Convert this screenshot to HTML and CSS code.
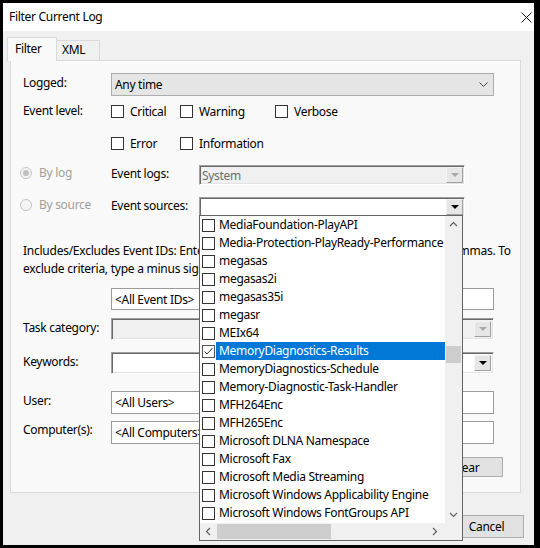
FILE: index.html
```html
<!DOCTYPE html>
<html lang="en">
<head>
    <meta charset="UTF-8">
    <link rel="stylesheet" href="styles.css">
    <title>Filter Current Log</title>
</head>
<body>
<div class="dialog">
    <div class="titleBar">
        <span class="titleText">Filter Current Log</span>
        <svg class="closeIcon" width="11" height="11" viewBox="0 0 11 11">
            <path d="M0.5 0.5 L10.5 10.5 M10.5 0.5 L0.5 10.5" stroke="#111" stroke-width="1" fill="none"/>
        </svg>
    </div>

    <div class="tabStrip">
        <div class="tab tabActive">Filter</div>
        <div class="tab">XML</div>
    </div>

    <div class="tabPage">
        <div class="row rowLogged">
            <span class="fieldLabel">Logged:</span>
            <div class="combo">
                <span>Any time</span>
                <svg width="9" height="5" viewBox="0 0 9 5">
                    <path d="M0.5 0.5 L4.5 4.5 L8.5 0.5" stroke="#444" fill="none"/>
                </svg>
            </div>
        </div>

        <div class="row rowLevel">
            <span class="fieldLabel levelLabel">Event level:</span>
            <div class="levelGrid">
                <label class="check"><span class="box"></span>Critical</label>
                <label class="check"><span class="box"></span>Warning</label>
                <label class="check"><span class="box"></span>Verbose</label>
                <label class="check"><span class="box"></span>Error</label>
                <label class="check"><span class="box"></span>Information</label>
            </div>
        </div>

        <div class="sourceRow sourceLog">
            <span class="radioWrap"><span class="radio radioOn"></span>By log</span>
            <span class="fieldLabel">Event logs:</span>
            <div class="oldCombo oldComboOff">
                <span>System</span>
                <span class="dropBtn dropBtnOff"></span>
            </div>
        </div>

        <div class="sourceRow sourceSrc">
            <span class="radioWrap"><span class="radio"></span>By source</span>
            <span class="fieldLabel">Event sources:</span>
            <div class="oldCombo">
                <span></span>
                <span class="dropBtn"></span>
            </div>
        </div>

        <p class="hint">Includes/Excludes Event IDs: Enter ID numbers and/or ID ranges separated by commas. To<br>exclude criteria, type a minus sign first. For example 1,3,5-99,-76</p>

        <div class="row rowIds">
            <span></span>
            <div class="textBox">&lt;All Event IDs&gt;</div>
        </div>

        <div class="row rowTask">
            <span class="fieldLabel">Task category:</span>
            <div class="oldCombo oldComboOff wide">
                <span></span>
                <span class="dropBtn dropBtnOff"></span>
            </div>
        </div>

        <div class="row rowKeywords">
            <span class="fieldLabel">Keywords:</span>
            <div class="oldCombo wide">
                <span></span>
                <span class="dropBtn"></span>
            </div>
        </div>

        <div class="row rowUser">
            <span class="fieldLabel">User:</span>
            <div class="textBox tall">&lt;All Users&gt;</div>
        </div>

        <div class="row rowComputer">
            <span class="fieldLabel">Computer(s):</span>
            <div class="textBox tall">&lt;All Computers&gt;</div>
        </div>

        <div class="clearRow">
            <button class="btn btnClear">Clear</button>
        </div>
    </div>

    <div class="footer">
        <button class="btn">OK</button>
        <button class="btn">Cancel</button>
    </div>

    <!-- open list of the Event sources combo -->
    <div class="dropList">
        <div class="items">
            <div class="item"><span class="box"></span><span class="itemText">MediaFoundation-PlayAPI</span></div>
            <div class="item"><span class="box"></span><span class="itemText">Media-Protection-PlayReady-Performance</span></div>
            <div class="item"><span class="box"></span><span class="itemText">megasas</span></div>
            <div class="item"><span class="box"></span><span class="itemText">megasas2i</span></div>
            <div class="item"><span class="box"></span><span class="itemText">megasas35i</span></div>
            <div class="item"><span class="box"></span><span class="itemText">megasr</span></div>
            <div class="item"><span class="box"></span><span class="itemText">MEIx64</span></div>
            <div class="item itemSelected">
                <span class="box boxChecked">
                    <svg width="11" height="11" viewBox="0 0 11 11">
                        <path d="M1.5 5.5 L4 8 L9.5 2" stroke="#333" stroke-width="1" fill="none"/>
                    </svg>
                </span>
                <span class="itemText">MemoryDiagnostics-Results</span>
            </div>
            <div class="item"><span class="box"></span><span class="itemText">MemoryDiagnostics-Schedule</span></div>
            <div class="item"><span class="box"></span><span class="itemText">Memory-Diagnostic-Task-Handler</span></div>
            <div class="item"><span class="box"></span><span class="itemText">MFH264Enc</span></div>
            <div class="item"><span class="box"></span><span class="itemText">MFH265Enc</span></div>
            <div class="item"><span class="box"></span><span class="itemText">Microsoft DLNA Namespace</span></div>
            <div class="item"><span class="box"></span><span class="itemText">Microsoft Fax</span></div>
            <div class="item"><span class="box"></span><span class="itemText">Microsoft Media Streaming</span></div>
            <div class="item"><span class="box"></span><span class="itemText">Microsoft Windows Applicability Engine</span></div>
            <div class="item"><span class="box"></span><span class="itemText">Microsoft Windows FontGroups API</span></div>
        </div>
        <div class="vScroll">
            <svg width="17" height="17" viewBox="0 0 17 17">
                <path d="M5 10 L8.5 6.5 L12 10" stroke="#606060" stroke-width="1.2" fill="none"/>
            </svg>
            <div class="vThumb"></div>
            <svg class="vDown" width="17" height="17" viewBox="0 0 17 17">
                <path d="M5 7 L8.5 10.5 L12 7" stroke="#606060" stroke-width="1.2" fill="none"/>
            </svg>
        </div>
        <div class="hScroll">
            <svg width="17" height="17" viewBox="0 0 17 17">
                <path d="M10 5 L6.5 8.5 L10 12" stroke="#606060" stroke-width="1.2" fill="none"/>
            </svg>
            <div class="hThumb"></div>
            <svg class="hRight" width="17" height="17" viewBox="0 0 17 17">
                <path d="M7 5 L10.5 8.5 L7 12" stroke="#606060" stroke-width="1.2" fill="none"/>
            </svg>
        </div>
        <div class="corner"></div>
    </div>
</div>
</body>
</html>
```

FILE: styles.css
```css
body {
    margin: 0;
    background: #000;
    font-family: "Noto Sans", "Open Sans", sans-serif;
    font-size: 12px;
    letter-spacing: -0.3px;
    color: #000;
}

.dialog {
    position: relative;
    margin: 3px 0 0 3px;
    width: 531px;
    height: 542px;
    background: #f0f0f0;
    overflow: hidden;
}

.titleBar {
    height: 28px;
    background: #fff;
    display: flex;
    align-items: center;
    justify-content: space-between;
    padding: 0 2px 0 6px;
}

.titleText {
    margin-top: -2px;
}

.closeIcon {
    margin-top: 1px;
}

/* tabs */

.tabStrip {
    display: flex;
    align-items: flex-end;
    height: 23px;
    margin-top: 6px;
    padding-left: 4px;
}

.tab {
    box-sizing: border-box;
    height: 20px;
    padding: 0 7px 0 5px;
    border: 1px solid #d9d9d9;
    border-bottom: none;
    background: #f0f0f0;
    line-height: 18px;
}

.tabActive {
    position: relative;
    z-index: 1;
    height: 24px;
    width: 50px;
    margin-bottom: -1px;
    padding-left: 7px;
    background: #f9f9f9;
    line-height: 22px;
}

.tabActive + .tab {
    border-left: none;
    width: 43px;
}

.tabPage {
    box-sizing: border-box;
    width: 511px;
    height: 433px;
    margin-left: 7px;
    padding-left: 12px;
    border: 1px solid #d9d9d9;
    background: #f9f9f9;
    overflow: hidden;
}

/* form rows */

.row {
    display: grid;
    grid-template-columns: 88px 383px;
    align-items: center;
}

.fieldLabel {
    margin-top: -4px;
}

.rowLogged { margin-top: 12px; }
.rowLevel { margin-top: 6px; align-items: start; }
.rowIds { margin-top: 10px; }
.rowTask { margin-top: 8px; }
.rowKeywords { margin-top: 12px; }
.rowUser { margin-top: 17px; }
.rowComputer { margin-top: 7px; }

.rowComputer .fieldLabel {
    margin-top: -7px;
}

.levelLabel {
    margin-top: 0;
    line-height: 18px;
}

.combo {
    box-sizing: border-box;
    height: 23px;
    display: flex;
    align-items: center;
    justify-content: space-between;
    padding: 0 5px 0 3px;
    border: 1px solid #adadad;
    background: #e5e5e5;
}

.levelGrid {
    display: grid;
    grid-template-columns: 69px 95px auto;
    grid-auto-rows: 18px;
    row-gap: 14px;
}

.check {
    display: flex;
    align-items: center;
    gap: 6px;
}

.box {
    box-sizing: border-box;
    width: 13px;
    height: 13px;
    border: 1px solid #333;
    background: #fff;
    flex-shrink: 0;
}

.sourceRow {
    display: grid;
    grid-template-columns: 88px 88px 266px;
    align-items: center;
}

.sourceLog { margin-top: 13px; }
.sourceSrc { margin-top: 12px; }

.radioWrap {
    display: flex;
    align-items: center;
    gap: 7px;
    margin: -5px 0 0 -3px;
    color: #a0a0a0;
}

.radio {
    box-sizing: border-box;
    width: 12px;
    height: 12px;
    border: 1px solid #c4c4c4;
    border-radius: 50%;
    background: #f4f4f4;
    display: flex;
    align-items: center;
    justify-content: center;
}

.radioOn::after {
    content: "";
    width: 6px;
    height: 6px;
    border-radius: 50%;
    background: #c0c0c0;
}

/* classic sunken combo with its small drop button */

.oldCombo {
    box-sizing: border-box;
    height: 20px;
    display: flex;
    align-items: center;
    justify-content: space-between;
    padding: 0 1px 0 2px;
    border: 1px solid;
    border-color: #a0a0a0 #fff #fff #a0a0a0;
    box-shadow: inset 1px 1px 0 #696969, inset -1px -1px 0 #e3e3e3;
    background: #fff;
}

.oldComboOff {
    background: #f0f0f0;
    color: #6d6d6d;
}

.oldCombo.wide {
    height: 22px;
    padding-right: 2px;
}

.dropBtn {
    box-sizing: border-box;
    width: 17px;
    height: 16px;
    background: #e6e6e6;
    border: 1px solid;
    border-color: #f4f4f4 #a0a0a0 #a0a0a0 #f4f4f4;
    display: flex;
    align-items: center;
    justify-content: center;
}

.dropBtn::after {
    content: "";
    border-left: 4px solid transparent;
    border-right: 4px solid transparent;
    border-top: 4px solid #000;
}

.dropBtnOff::after {
    border-top-color: #a8a8a8;
}

.hint {
    margin: 25px 0 0;
    line-height: 18px;
    white-space: nowrap;
    letter-spacing: -0.25px;
}

.textBox {
    box-sizing: border-box;
    height: 22px;
    display: flex;
    align-items: center;
    padding-left: 3px;
    border: 1px solid #9b9b9b;
    background: #fff;
}

.textBox.tall {
    height: 23px;
}

.clearRow {
    display: flex;
    justify-content: flex-end;
    margin: 13px 17px 0 0;
}

.btn {
    box-sizing: border-box;
    width: 75px;
    height: 23px;
    border: 1px solid #adadad;
    background: #e1e1e1;
    font: inherit;
    letter-spacing: inherit;
    color: #000;
    padding: 0;
}

.btnClear {
    height: 20px;
}

.footer {
    display: flex;
    justify-content: flex-end;
    gap: 8px;
    margin-top: 22px;
    padding-right: 10px;
}

/* open drop-down list */

.dropList {
    position: absolute;
    left: 196px;
    top: 212px;
    box-sizing: border-box;
    width: 264px;
    height: 326px;
    border: 1px solid #646464;
    background: #fff;
    display: grid;
    grid-template-columns: 1fr 17px;
    grid-template-rows: 1fr 17px;
    z-index: 2;
}

.items {
    overflow: hidden;
}

.item {
    display: flex;
    align-items: center;
    height: 18px;
    white-space: nowrap;
}

.item .box {
    margin-left: 2px;
}

.itemText {
    flex: 1;
    height: 18px;
    line-height: 18px;
    margin-left: 1px;
    padding-left: 3px;
}

.itemSelected .itemText {
    background: #0078d7;
    color: #fff;
}

.boxChecked {
    border-color: #555;
    display: flex;
    align-items: center;
    justify-content: center;
}

.vScroll {
    background: #f0f0f0;
    display: flex;
    flex-direction: column;
}

.vThumb {
    width: 15px;
    height: 17px;
    margin: 113px 0 0 1px;
    background: #cdcdcd;
}

.vDown {
    margin-top: auto;
}

.hScroll {
    background: #f0f0f0;
    display: flex;
    align-items: center;
}

.hThumb {
    width: 114px;
    height: 15px;
    background: #cdcdcd;
}

.hRight {
    margin-left: auto;
    margin-right: 2px;
}

.corner {
    background: #f0f0f0;
}
```
